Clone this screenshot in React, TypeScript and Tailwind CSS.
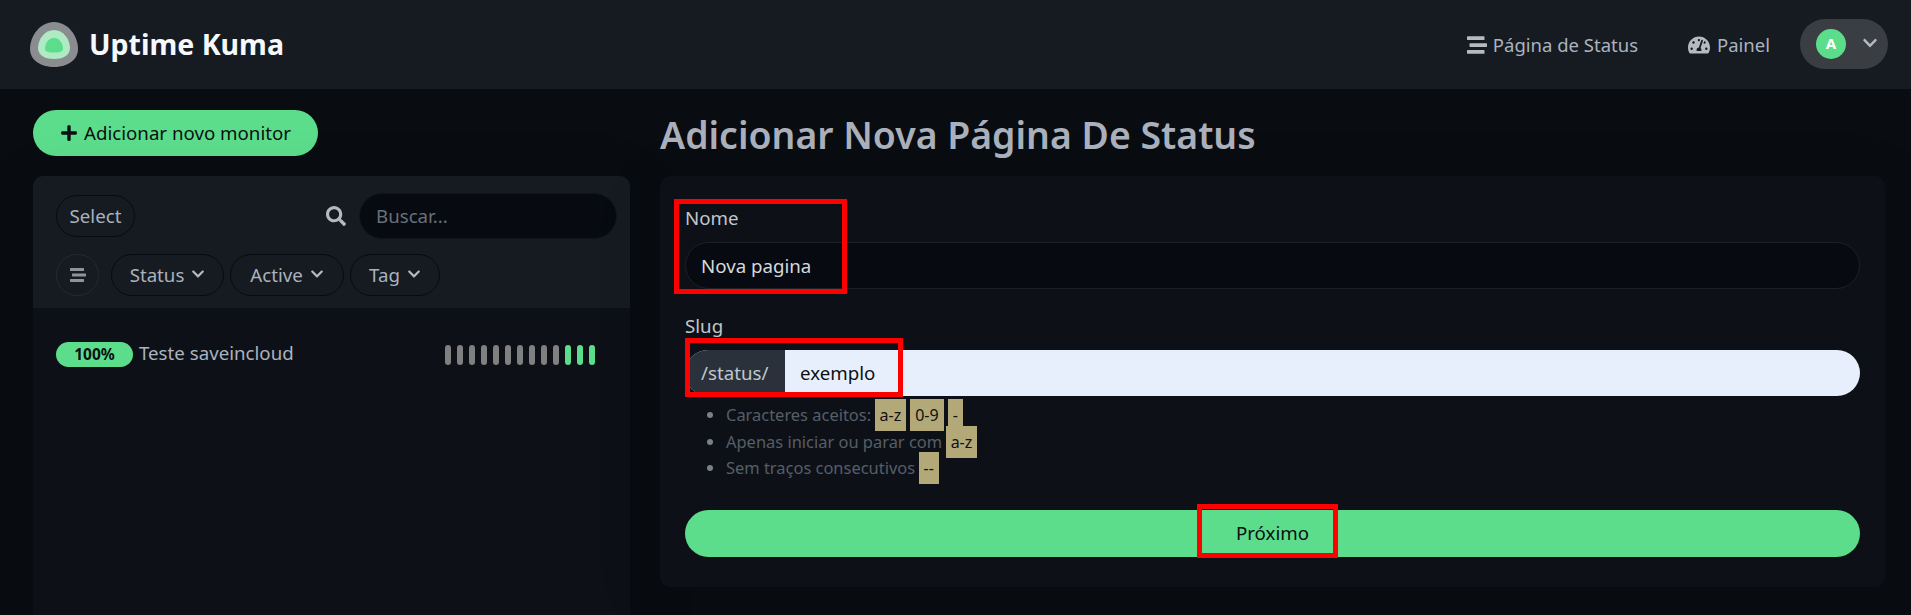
import { FaChevronDown, FaPlus, FaSearch, FaStream, FaTachometerAlt } from "react-icons/fa";

const beats = ["g","g","g","g","g","g","g","g","g","g","u","u","u"];

function Filter({ label, w }: { label: string; w: string }) {
  return (
    <button className={`${w} h-[42px] rounded-full border border-[#070a10] text-[#a9b2bd] flex items-center justify-center gap-[7px]`}>
      <span className="pt-[1px]">{label}</span>
      <FaChevronDown className="text-[14px] text-[#b4bac2] -mt-[3px]" />
    </button>
  );
}

function Code({ children }: { children: string }) {
  return <code className="bg-[#b2a878] text-[#111] px-[5px] py-[5px] text-[16px] mx-[1.5px]" style={{ fontFamily: '"Noto Sans", sans-serif' }}>{children}</code>;
}

export default function App() {
  return (
    <div className="relative h-[615px] w-[1911px] overflow-hidden bg-[#090c10] text-[18.700px] text-[#b1b8c0] font-['Noto_Sans',sans-serif]">
      <header className="h-[89px] bg-[#161b22] flex items-center pl-[30px] pr-[23px]">
        <svg width="48" height="45" viewBox="0 0 48 45" className="mr-[11px]">
          <path d="M24 0C38 0 48 14 48 27C48 39 36 45 24 45C12 45 0 39 0 27C0 14 10 0 24 0Z" fill="#8a8c90" />
          <path d="M24 8C33 8 40 17 40 26C40 34 32 37 24 37C16 37 8 34 8 26C8 17 15 8 24 8Z" fill="#aeeac4" />
          <path d="M24 16C30 16 33 22 33 27C33 30 28 30.500 24 30.500C20 30.500 15 30 15 27C15 22 18 16 24 16Z" fill="#5cdd8b" />
        </svg>
        <span className="text-[28.500px] font-bold text-[#f5f8fc]">Uptime Kuma</span>
        <nav className="ml-auto flex items-center text-[18.500px]">
          <a className="flex items-center gap-[6px] text-[#aab3bf]"><FaStream className="text-[20px] text-[#b4bac2]" />Página de Status</a>
          <a className="ml-[50px] flex items-center gap-[7px] text-[#aab3bf]"><FaTachometerAlt className="text-[22px] text-[#b4bac2]" />Painel</a>
          <div className="ml-[30px] mb-[2px] w-[88px] h-[50px] rounded-full bg-[#3a3d42] flex items-center pl-[16px] pr-[10px] justify-between">
            <div className="w-[30px] h-[30px] rounded-full bg-[#5cdd8b] flex items-center justify-center text-[15px] font-bold text-white">A</div>
            <FaChevronDown className="text-[16px] text-[#b4bac2] -mt-[1px]" />
          </div>
        </nav>
      </header>

      <main className="flex pl-[33px] pr-[26px] pt-[21px] gap-[30px]">
        <section className="w-[597px] shrink-0">
          <button className="h-[46px] w-[285px] rounded-full bg-[#5cdd8b] text-[#0b0f12] flex items-center justify-center gap-[6px]">
            <FaPlus className="text-[18px]" /><span className="pt-[1px]">Adicionar novo monitor</span>
          </button>
          <div className="mt-[20px] rounded-[10px] bg-[#0d1117] h-[600px] overflow-hidden shadow-[0_15px_70px_rgba(0,0,0,0.1)]">
            <div className="h-[132px] bg-[#161b22] pl-[23px] pr-[13px] pt-[17px]">
              <div className="flex items-center">
                <button className="w-[79px] h-[42px] rounded-full border border-[#070a10] text-[#a9b2bd] pt-[1px]">Select</button>
                <FaSearch className="ml-auto text-[20px] text-[#b4bac2]" />
                <div className="ml-[13px] w-[258px] h-[46px] rounded-full bg-[#070a10] border border-[#11161d] pl-[16px] pt-[1px] flex items-center text-[#68707b]">Buscar...</div>
              </div>
              <div className="mt-[15px] flex items-center">
                <button className="w-[43px] h-[42px] rounded-full border border-[#252a31] flex items-center justify-center text-[#8f949b] mr-[12px]"><FaStream className="text-[16px]" /></button>
                <Filter label="Status" w="w-[113px]" />
                <div className="w-[6px]" />
                <Filter label="Active" w="w-[114px]" />
                <div className="w-[6px]" />
                <Filter label="Tag" w="w-[90px]" />
              </div>
            </div>
            <div className="pl-[23px] pr-[35px] pt-[34px] flex items-start">
              <span className="w-[77px] h-[25px] rounded-full bg-[#5cdd8b] text-[#0b0f12] text-[15.500px] font-bold flex items-center justify-center">100%</span>
              <span className="ml-[6px] leading-[22px] text-[#aab3bf]">Teste saveincloud</span>
              <div className="ml-auto mt-[3px] flex gap-[6px]">
                {beats.map((b, i) => (
                  <div key={i} className={b === "u" ? "w-[6px] h-[20px] rounded-full bg-[#5cdd8b]" : "w-[6px] h-[20px] rounded-full bg-[#808080]"} />
                ))}
              </div>
            </div>
          </div>
        </section>

        <section className="flex-1 min-w-0">
          <h1 className="h-[46px] flex items-center pt-[5px] text-[37.400px] font-semibold text-[#a9b0bb]">Adicionar Nova Página De Status</h1>
          <div className="mt-[20px] h-[411px] rounded-[10px] bg-[#0d1117] px-[25px] pt-[29px] shadow-[0_15px_70px_rgba(0,0,0,0.1)]">
            <div className="h-[26px] leading-[26px] text-[#c0c6cd]">Nome</div>
            <div className="mt-[11px] h-[47px] rounded-full bg-[#070a10] border border-[#1c2128] pl-[15px] pt-[1px] flex items-center text-[#d5d9de]">Nova pagina</div>
            <div className="mt-[24px] h-[26px] leading-[26px] text-[#c0c6cd]">Slug</div>
            <div className="mt-[11px] h-[46px] rounded-full overflow-hidden bg-[#e8effc] flex items-center text-[#0b0f12]">
              <span className="w-[100px] h-full bg-[#2a313b] text-[#c0c6cd] flex items-center pl-[16px]">/status/</span>
              <span className="ml-[15px]">exemplo</span>
            </div>
            <ul className="mt-[6px] pl-[41px] list-disc marker:text-[#7a8087] text-[#565e68] leading-[26.500px] text-[16.450px]">
              <li>Caracteres aceitos:<span className="ml-[2px]" /><Code>a-z</Code><span className="ml-[1px]" /><Code>0-9</Code><span className="ml-[1px]" /><Code>-</Code></li>
              <li>Apenas iniciar ou parar com<span className="ml-[2px]" /><Code>a-z</Code></li>
              <li>Sem traços consecutivos<span className="ml-[2px]" /><Code>--</Code></li>
            </ul>
            <button className="mt-[28px] w-full h-[47px] rounded-full bg-[#5cdd8b] text-[#0b0f12]">Próximo</button>
          </div>
        </section>
      </main>

      <div className="absolute left-[674px] top-[199px] w-[173px] h-[95px] border-[5px] border-[#ff0000]" />
      <div className="absolute left-[685px] top-[338px] w-[218px] h-[59px] border-[5px] border-[#ff0000]" />
      <div className="absolute left-[1197px] top-[504px] w-[141px] h-[54px] border-[5px] border-[#ff0000]" />
    </div>
  );
}
